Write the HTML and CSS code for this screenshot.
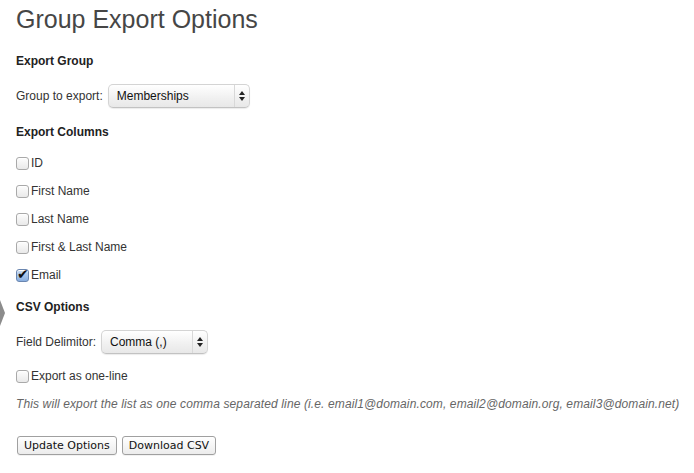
FILE: index.html
```html
<!DOCTYPE html>
<html>
<head>
<meta charset="utf-8">
<title>Group Export Options</title>
<link rel="stylesheet" href="styles.css">
</head>
<body>
<span class="menu-pointer" aria-hidden="true"></span>
<div class="wrap">
  <h2 class="title">Group Export Options</h2>
  <form class="options">
    <h3 class="section section-first">Export Group</h3>
    <div class="field-row">
      <label class="field-label" for="group">Group to export:</label>
      <span class="select select-group">
        <select id="group"><option>Memberships</option></select>
        <span class="select-arrows"><svg width="6" height="10" viewBox="0 0 6 10"><path d="M3 0 L6 4 L0 4 Z M0 6 L6 6 L3 10 Z" fill="#222"/></svg></span>
      </span>
    </div>

    <h3 class="section">Export Columns</h3>
    <div class="checks">
      <label class="check"><input type="checkbox"><span>ID</span></label>
      <label class="check"><input type="checkbox"><span>First Name</span></label>
      <label class="check"><input type="checkbox"><span>Last Name</span></label>
      <label class="check"><input type="checkbox"><span>First &amp; Last Name</span></label>
      <label class="check"><input type="checkbox" checked><span>Email</span></label>
    </div>

    <h3 class="section">CSV Options</h3>
    <div class="field-row">
      <label class="field-label" for="delim">Field Delimitor:</label>
      <span class="select select-delim">
        <select id="delim"><option>Comma (,)</option></select>
        <span class="select-arrows"><svg width="6" height="10" viewBox="0 0 6 10"><path d="M3 0 L6 4 L0 4 Z M0 6 L6 6 L3 10 Z" fill="#222"/></svg></span>
      </span>
    </div>
    <label class="check check-oneline"><input type="checkbox"><span>Export as one-line</span></label>
    <p class="description">This will export the list as one comma separated line (i.e. email1@domain.com, email2@domain.org, email3@domain.net)</p>

    <div class="buttons">
      <button type="button" class="button">Update Options</button>
      <button type="button" class="button">Download CSV</button>
    </div>
  </form>
</div>
</body>
</html>
```
FILE: styles.css
```css
html, body {
  margin: 0;
  padding: 0;
  background: #fff;
}
body {
  font-family: "Liberation Sans", Arial, sans-serif;
  font-size: 12px;
  color: #333;
  position: relative;
  width: 694px;
  height: 473px;
  overflow: hidden;
}
.menu-pointer {
  position: absolute;
  left: 0;
  top: 300px;
  width: 5px;
  height: 26px;
  background: #8c8c8c;
  clip-path: polygon(0 0, 100% 50%, 0 100%);
}
.wrap {
  padding: 4px 16px 0 16px;
}
.title {
  margin: 0;
  font-size: 25px;
  font-weight: normal;
  line-height: 30px;
  color: #464646;
}
.options {
  display: flex;
  flex-direction: column;
  align-items: flex-start;
}
.section {
  margin: 16px 0 0 0;
  font-size: 12px;
  font-weight: bold;
  line-height: 16px;
  color: #222;
}
.section-first {
  margin-top: 19px;
}
.field-row {
  display: flex;
  align-items: center;
  gap: 5px;
  margin-top: 15px;
}
.field-label {
  line-height: 16px;
}
.select {
  position: relative;
  display: inline-flex;
  height: 24px;
  box-sizing: border-box;
  border: 1px solid #d4d4d4;
  border-bottom-color: #c2c2c2;
  border-radius: 5px;
  background: linear-gradient(#ffffff, #f0f0f0 60%, #e8e8e8);
  box-shadow: 0 1px 1px rgba(0,0,0,0.08);
}
.select select {
  -webkit-appearance: none;
  appearance: none;
  border: 0;
  background: transparent;
  font-family: "Liberation Sans", Arial, sans-serif;
  font-size: 12px;
  color: #111;
  padding: 0 0 0 8px;
  margin: 0;
  height: 22px;
  outline: none;
}
.select-group { width: 142px; }
.select-group select { width: 125px; }
.select-delim { width: 107px; height: 24px; }
.select-delim select { width: 90px; padding-left: 8px; }
.select-arrows {
  flex: 1;
  display: flex;
  align-items: center;
  justify-content: center;
  border-left: 1px solid #d8d8d8;
}
.checks {
  display: flex;
  flex-direction: column;
  gap: 12px;
  margin-top: 15px;
}
.check {
  display: flex;
  align-items: center;
  gap: 2px;
  line-height: 16px;
}
.check input {
  -webkit-appearance: none;
  appearance: none;
  position: relative;
  width: 13px;
  height: 13px;
  margin: 1px 0 0 0;
  box-sizing: border-box;
  border: 1px solid #a9a9a9;
  border-radius: 3px;
  background: linear-gradient(#fdfdfd, #e9e9e9);
  box-shadow: inset 0 1px 0 #fff;
}
.check input:checked {
  background: linear-gradient(#c9dcf3, #88aee0);
  border-color: #6a86b0;
}
.check input:checked::before {
  content: "\2714";
  position: absolute;
  left: 0px;
  top: -4px;
  font-family: "DejaVu Sans", sans-serif;
  font-size: 14px;
  line-height: 16px;
  color: #111;
}
.check-oneline {
  margin-top: 14px;
}
.description {
  margin: 12px 0 0 0;
  line-height: 16px;
  font-style: italic;
  color: #666;
  letter-spacing: 0.12px;
  white-space: nowrap;
}
.buttons {
  display: flex;
  gap: 5px;
  margin-top: 24px;
  margin-left: 1px;
}
.button {
  font-family: "DejaVu Sans", sans-serif;
  font-size: 11px;
  color: #111;
  height: 19px;
  box-sizing: border-box;
  padding: 0 6px;
  border: 1px solid #a0a0a0;
  border-radius: 3px;
  background: linear-gradient(#ffffff, #ececec);
  box-shadow: 0 1px 0 rgba(0,0,0,0.05);
  margin: 0;
  line-height: 17px;
}
```
